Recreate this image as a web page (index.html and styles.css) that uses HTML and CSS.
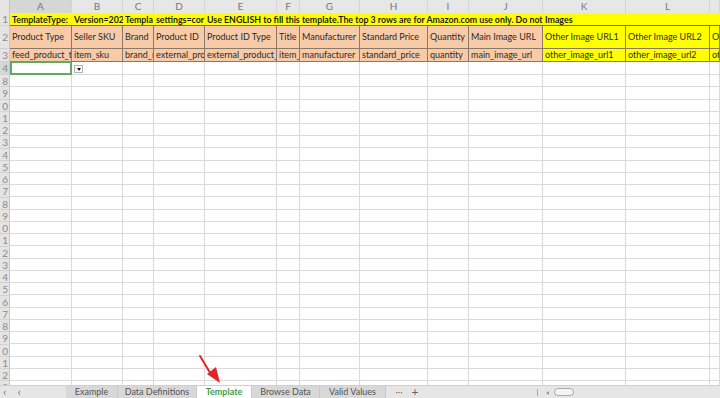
FILE: index.html
```html
<!DOCTYPE html>
<html>
<head>
<meta charset="utf-8">
<link rel="stylesheet" href="styles.css">
</head>
<body>
<div class="app">
  <div class="sheet">
    <div class="row colhead">
      <div class="rh corner"></div>
      <div class="ch sel">A</div><div class="ch">B</div><div class="ch">C</div><div class="ch">D</div>
      <div class="ch">E</div><div class="ch">F</div><div class="ch">G</div><div class="ch">H</div>
      <div class="ch">I</div><div class="ch">J</div><div class="ch">K</div><div class="ch">L</div><div class="ch"></div>
    </div>
    <div class="row r1">
      <div class="rh">1</div>
      <div class="c">TemplateType:</div>
      <div class="c">Version=202</div>
      <div class="c">Templa</div>
      <div class="c">settings=cor</div>
      <div class="c span6">Use ENGLISH to fill this template.The top 3 rows are for Amazon.com use only. Do not<span class="cut">edit</span></div>
      <div class="c">Images</div>
      <div class="c"></div>
      <div class="c"></div>
    </div>
    <div class="row r2">
      <div class="rh">2</div>
      <div class="c">Product Type</div>
      <div class="c">Seller SKU</div>
      <div class="c">Brand</div>
      <div class="c">Product ID</div>
      <div class="c">Product ID Type</div>
      <div class="c">Title</div>
      <div class="c">Manufacturer</div>
      <div class="c">Standard Price</div>
      <div class="c">Quantity</div>
      <div class="c">Main Image URL</div>
      <div class="c y">Other Image URL1</div>
      <div class="c y">Other Image URL2</div>
      <div class="c y">Other Image URL3</div>
    </div>
    <div class="row r3">
      <div class="rh">3</div>
      <div class="c">feed_product_type</div>
      <div class="c">item_sku</div>
      <div class="c">brand_name</div>
      <div class="c">external_product_id</div>
      <div class="c">external_product_id_type</div>
      <div class="c">item_name</div>
      <div class="c">manufacturer</div>
      <div class="c">standard_price</div>
      <div class="c">quantity</div>
      <div class="c">main_image_url</div>
      <div class="c y">other_image_url1</div>
      <div class="c y">other_image_url2</div>
      <div class="c y">other_image_url3</div>
    </div>
    <div class="row r4">
      <div class="rh selrh">4</div>
      <div class="c active"></div>
      <div class="c"><span class="dd"></span></div>
      <div class="c"></div><div class="c"></div><div class="c"></div><div class="c"></div>
      <div class="c"></div><div class="c"></div><div class="c"></div><div class="c"></div>
      <div class="c"></div><div class="c"></div><div class="c"></div>
    </div>
    <div class="body">
      <div class="rnums">
        <div>8</div><div>9</div><div>0</div><div>1</div><div>2</div><div>3</div><div>4</div>
        <div>5</div><div>6</div><div>7</div><div>8</div><div>9</div><div>0</div><div>1</div>
        <div>2</div><div>3</div><div>4</div><div>5</div><div>6</div><div>7</div><div>8</div>
        <div>9</div><div>0</div><div>1</div><div>2</div><div>3</div>
      </div>
      <div class="cols">
        <div></div><div></div><div></div><div></div><div></div><div></div><div></div>
        <div></div><div></div><div></div><div></div><div></div><div></div>
      </div>
    </div>
  </div>
  <div class="tabbar">
    <div class="nav"><span>&lsaquo;</span><span>&lsaquo;</span></div>
    <div class="tabs">
      <div class="tab">Example</div>
      <div class="tab">Data Definitions</div>
      <div class="tab on">Template</div>
      <div class="tab">Browse Data</div>
      <div class="tab">Valid Values</div>
    </div>
    <div class="more">&middot;&middot;&middot;</div>
    <div class="plus">+</div>
    <div class="hscroll">
      <span class="sep"></span>
      <span class="larr"></span>
      <span class="thumb"></span>
    </div>
  </div>
  <svg class="arrow" width="40" height="40" viewBox="0 0 40 40">
    <path d="M2 2 L14 22" stroke="#e0262a" stroke-width="2" fill="none" stroke-linecap="round"/>
    <path d="M9 20 L22 29 L18 13 Z" fill="#e0262a"/>
  </svg>
</div>
</body>
</html>
```
FILE: styles.css
```css
* { box-sizing: border-box; }
html, body { margin: 0; padding: 0; background: #fff; }
body { width: 720px; height: 398px; overflow: hidden; font-family: Lato, "Open Sans", sans-serif; }
.app { position: relative; width: 720px; height: 398px; display: flex; flex-direction: column; }
.sheet { height: 385px; overflow: hidden; }
.row {
  display: grid;
  grid-template-columns: 10px 62px 51px 31px 51px 72px 23px 60px 68px 41px 74px 83px 84px 10px;
  position: relative;
}
.rh {
  background: #e4e4e4;
  color: #8a8a8a;
  font-size: 10px;
  text-align: right;
  overflow: hidden;
  line-height: 12px;
  border-right: 1px solid #c6c6c6;
  border-bottom: 1px solid #d2d2d2;
  padding-right: 1px;
}
.colhead { height: 13px; }
.corner { border-bottom: 1px solid #c6c6c6; }
.ch {
  background: #e7e7e7;
  color: #777;
  font-size: 10px;
  text-align: center;
  line-height: 13px;
  border-right: 1px solid #d4d4d4;
  border-bottom: 1px solid #c6c6c6;
}
.ch.sel { background: #d6d6d6; border-bottom: 1px solid #9cc8a4; }
.c {
  overflow: hidden;
  white-space: nowrap;
  font-size: 9px;
  color: #2a2a2a;
  padding-left: 2px;
}
.r1 { height: 13px; background: #ffff00; }
.r1 .c { font-weight: bold; font-size: 8.8px; line-height: 13px; color: #1e1e1e; border-bottom: 1px solid #6e6a52; }
.r1 .rh { line-height: 13px; }
.r1 .span6 { grid-column: span 6; }
.cut { padding-left: 12px; }
.r2, .r3 { background: #f7caa8; }
.r2 { height: 23px; }
.r3 { height: 13px; }
.r2 .c, .r3 .c { border-right: 1px solid #8c7866; border-bottom: 1px solid #8c7866; }
.r2 .c { line-height: 22px; }
.r3 .c { line-height: 12px; }
.r2 .rh { line-height: 22px; }
.c.y { background: #ffff00; }
.r4 { height: 13px; }
.r4 .c { border-right: 1px solid #dadada; border-bottom: 1px solid #dadada; position: relative; overflow: visible; }
.selrh { background: #d6d6d6; }
.c.active { border: 2px solid #5ea86a; margin: -1px 0 0 0; }
.dd {
  position: absolute; left: 2px; top: 3px;
  width: 9px; height: 8px;
  background: #fff; border: 1px solid #b4b4b4;
}
.dd::after {
  content: ""; position: absolute; left: 1.5px; top: 2px;
  border-left: 2.5px solid transparent; border-right: 2.5px solid transparent; border-top: 3px solid #111;
}
.body { display: flex; }
.rnums { width: 10px; flex: none; }
.rnums div {
  height: 12.25px; background: #e4e4e4; color: #8a8a8a; font-size: 10px; line-height: 12px;
  text-align: right; padding-right: 1px; border-right: 1px solid #c6c6c6; border-bottom: 1px solid #d2d2d2;
  overflow: hidden;
}
.cols {
  flex: 1;
  display: grid;
  grid-template-columns: 62px 51px 31px 51px 72px 23px 60px 68px 41px 74px 83px 84px 10px;
  background: repeating-linear-gradient(to bottom, transparent 0, transparent 11.25px, #dadada 11.25px, #dadada 12.25px);
  height: 320px;
}
.cols div { border-right: 1px solid #dadada; }
.tabbar {
  height: 13px; background: #e6e6e6; display: flex; align-items: stretch;
  font-size: 9px; color: #555; border-top: 1px solid #d0d0d0;
}
.nav { width: 66px; flex: none; display: flex; gap: 11px; padding-left: 3px; font-size: 12px; color: #777; line-height: 11px; }
.tabs { display: flex; flex: none; }
.tab { white-space: nowrap; text-align: center; line-height: 12px; background: #d8d8d8; border-right: 1px solid #c8c8c8; }
.tab:nth-child(1) { width: 52px; }
.tab:nth-child(2) { width: 79px; }
.tab:nth-child(3) { width: 55px; }
.tab:nth-child(4) { width: 68px; }
.tab:nth-child(5) { width: 66px; }
.tab.on { background: #fff; color: #3f9c4e; font-weight: bold; }
.more { width: 18px; flex: none; text-align: center; line-height: 11px; color: #777; margin-left: 4px; }
.plus { width: 14px; flex: none; text-align: center; font-size: 12px; line-height: 11px; color: #666; }
.hscroll { flex: 1; position: relative; }
.sep { position: absolute; left: 115px; top: 3px; width: 1px; height: 7px; background: #aaa; }
.larr { position: absolute; left: 124px; top: 5px; border-right: 3px solid #999; border-top: 2px solid transparent; border-bottom: 2px solid transparent; }
.thumb { position: absolute; left: 132px; top: 2px; width: 20px; height: 8px; border: 1px solid #aaa; border-radius: 5px; background: #f4f4f4; }
.arrow { position: absolute; left: 198px; top: 354px; }
```
